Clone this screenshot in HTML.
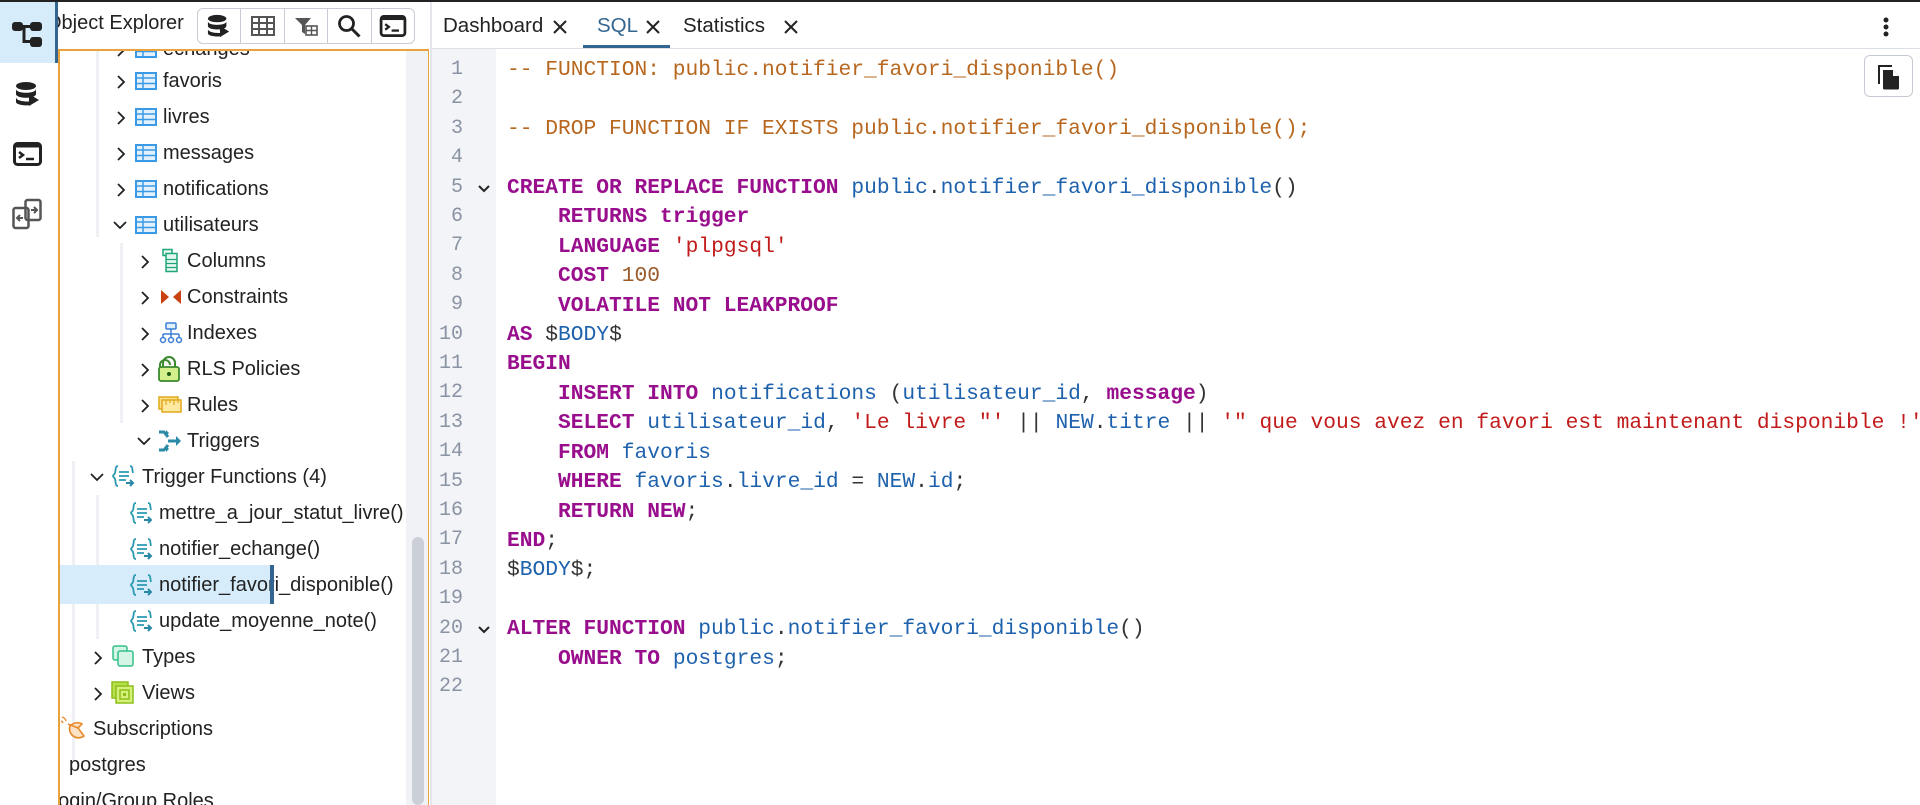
<!DOCTYPE html>
<html><head><meta charset="utf-8"><style>
*{margin:0;padding:0;box-sizing:border-box}
body{width:1920px;height:805px;overflow:hidden;background:#fff;font-family:"Liberation Sans",sans-serif;color:#222;position:relative}
.abs{position:absolute}
#top{left:0;top:0;width:1920px;height:2px;background:#222}
#bar{left:0;top:2px;width:57px;height:803px;background:#fff;z-index:5}
#bar .act{position:absolute;left:0;top:0;width:55px;height:61px;background:#d7ecfa}
#bar .act:after{content:"";position:absolute;left:55px;top:0;width:3px;height:61px;background:#326690}
#hdr{left:57px;top:2px;width:140px;height:46px;overflow:hidden}
#hdr .t{position:absolute;left:-11px;top:10px;font-size:20px;color:#222;white-space:nowrap}
#tb{left:197px;top:8px;width:218px;height:36px;border:1px solid #c9ccd4;border-radius:6px;display:flex;z-index:6;background:#fff}
#tb div{flex:1;border-right:1px solid #c9ccd4;display:flex;align-items:center;justify-content:center}
#tb div:last-child{border-right:none}
#tree{left:58px;top:49px;width:371px;height:756px;border:2px solid #e8a33d;border-bottom:none;overflow:hidden}
.row{position:absolute;left:0;height:36px;width:400px;font-size:20px;line-height:36px;white-space:nowrap}
.row .i{position:absolute;top:8px}
.row .x{position:absolute;top:0}
.guide{position:absolute;width:3px;background:#eef0f3}
#sb{left:406px;top:51px;width:22px;height:754px;background:#f1f2f5}
#thumb{left:412px;top:537px;width:12px;height:268px;background:#cbcfd8;border-radius:6px}
#sep{left:430px;top:2px;width:2px;height:803px;background:#e4e6eb}
#tabs{left:432px;top:2px;width:1488px;height:47px;border-bottom:1px solid #dcdfe6}
.tab{position:absolute;top:12px;font-size:20.5px;white-space:nowrap}
#gut{left:432px;top:49px;width:64px;height:756px;background:#f3f4f7}
.ln{position:absolute;width:40px;text-align:right;font-family:"Liberation Mono",monospace;font-size:20px;color:#8a93a3}
#code{left:507px;top:49px;width:1413px;height:756px;overflow:hidden;font-family:"Liberation Mono",monospace;font-size:21.25px;white-space:pre}
.cl{position:absolute;left:0;height:29.4px;line-height:29.4px}
.cm{color:#b8671f}.kw{color:#990e8d;font-weight:bold}.id{color:#1e62ad}.st{color:#c21b1b}.nu{color:#9a5a2a}.p{color:#333}
#copy{left:1864px;top:55px;width:49px;height:42px;border:1px solid #c6cad3;border-radius:6px;background:#fff}
</style></head><body>
<div id="top" class="abs"></div>
<div id="bar" class="abs">
 <div class="act"></div>
 <svg class="abs" style="left:11px;top:17px" width="32" height="30" viewBox="0 0 32 30"><rect x="1" y="3" width="11" height="9" rx="3" fill="#222"/><rect x="19" y="3" width="12" height="9" rx="3" fill="#222"/><rect x="19" y="18" width="12" height="10" rx="3" fill="#222"/><path d="M10 7.5h10M13 7.5v15h7" stroke="#222" stroke-width="3" fill="none"/></svg>
 <svg class="abs" style="left:15px;top:79px" width="26" height="26" viewBox="0 0 26 26"><ellipse cx="11" cy="5" rx="10" ry="4" fill="#222"/><path d="M1 8c0 5 20 5 20 0v5c0 5-20 5-20 0zM1 16c0 5 14 5 15 4v4c-5 1-15 0-15-3z" fill="#222"/><path d="M14 13l10 6-10 6z" fill="#222"/></svg>
 <svg class="abs" style="left:13px;top:140px" width="29" height="24" viewBox="0 0 29 24"><rect x="1.5" y="1.5" width="26" height="21" rx="3" fill="none" stroke="#222" stroke-width="3"/><rect x="1.5" y="1.5" width="26" height="4" fill="#222"/><path d="M6 10l4 3-4 3" stroke="#222" stroke-width="2.5" fill="none"/><path d="M13 17h8" stroke="#222" stroke-width="2.5"/></svg>
 <svg class="abs" style="left:12px;top:196px" width="30" height="32" viewBox="0 0 30 32"><rect x="1.5" y="10" width="15" height="20" rx="2" fill="none" stroke="#555" stroke-width="2.5"/><rect x="13.5" y="2" width="15" height="20" rx="2" fill="none" stroke="#555" stroke-width="2.5"/><path d="M11 20H5M8 17l-3 3 3 3M19 12h6M22 9l3 3-3 3" stroke="#555" stroke-width="2" fill="none"/></svg>
</div>
<div id="hdr" class="abs"><span class="t">Object Explorer</span></div>
<div id="tb" class="abs">
 <div><svg width="24" height="24" viewBox="0 0 26 26"><ellipse cx="11" cy="5" rx="10" ry="4" fill="#222"/><path d="M1 8c0 5 20 5 20 0v5c0 5-20 5-20 0zM1 16c0 5 14 5 15 4v4c-5 1-15 0-15-3z" fill="#222"/><path d="M14 13l10 6-10 6z" fill="#222"/></svg></div>
 <div><svg width="24" height="20" viewBox="0 0 24 20"><rect x="1" y="1" width="22" height="18" fill="none" stroke="#555" stroke-width="2"/><path d="M1 7h22M1 13h22M8 1v18M16 1v18" stroke="#555" stroke-width="2"/></svg></div>
 <div><svg width="24" height="20" viewBox="0 0 24 20"><path d="M1 2h16l-6 7v9l-3-2V9z" fill="#555"/><rect x="12" y="10" width="11" height="9" fill="none" stroke="#555" stroke-width="1.6"/><path d="M12 14.5h11M17.5 10v9" stroke="#555" stroke-width="1.4"/></svg></div>
 <div><svg width="24" height="24" viewBox="0 0 24 24"><circle cx="9.5" cy="9.5" r="7" fill="none" stroke="#222" stroke-width="2.8"/><path d="M14.5 14.5l8 8" stroke="#222" stroke-width="3"/></svg></div>
 <div><svg width="28" height="22" viewBox="0 0 29 24"><rect x="1.5" y="1.5" width="26" height="21" rx="3" fill="none" stroke="#222" stroke-width="3"/><rect x="1.5" y="1.5" width="26" height="4" fill="#222"/><path d="M6 10l4 3-4 3" stroke="#222" stroke-width="2.5" fill="none"/><path d="M13 17h8" stroke="#222" stroke-width="2.5"/></svg></div>
</div>

<div id="tree" class="abs">
 <div class="guide" style="left:36px;top:0;height:186px"></div>
 <div class="guide" style="left:60px;top:192px;height:180px"></div>
 <div class="guide" style="left:12px;top:410px;height:300px"></div>
 <div class="guide" style="left:36px;top:444px;height:144px"></div>
 <div class="row" style="top:-20px"><svg class="x" style="left:56px;top:12px" width="10" height="14" viewBox="0 0 10 14"><path d="M2 1l6 6-6 6" stroke="#222" stroke-width="1.8" fill="none"/></svg><svg class="i" style="left:75px" width="22" height="20" viewBox="0 0 22 20"><rect x="1" y="2" width="20" height="16" fill="#e3f1fc" stroke="#3b9ae6" stroke-width="2"/><path d="M1 7h20M1 12.5h20M8 2v16" stroke="#3b9ae6" stroke-width="1.5"/></svg><span class="x" style="left:103px">echanges</span></div>
 <div class="row" style="top:12px"><svg class="x" style="left:56px;top:12px" width="10" height="14" viewBox="0 0 10 14"><path d="M2 1l6 6-6 6" stroke="#222" stroke-width="1.8" fill="none"/></svg><svg class="i" style="left:75px" width="22" height="20" viewBox="0 0 22 20"><rect x="1" y="2" width="20" height="16" fill="#e3f1fc" stroke="#3b9ae6" stroke-width="2"/><path d="M1 7h20M1 12.5h20M8 2v16" stroke="#3b9ae6" stroke-width="1.5"/></svg><span class="x" style="left:103px">favoris</span></div>
 <div class="row" style="top:48px"><svg class="x" style="left:56px;top:12px" width="10" height="14" viewBox="0 0 10 14"><path d="M2 1l6 6-6 6" stroke="#222" stroke-width="1.8" fill="none"/></svg><svg class="i" style="left:75px" width="22" height="20" viewBox="0 0 22 20"><rect x="1" y="2" width="20" height="16" fill="#e3f1fc" stroke="#3b9ae6" stroke-width="2"/><path d="M1 7h20M1 12.5h20M8 2v16" stroke="#3b9ae6" stroke-width="1.5"/></svg><span class="x" style="left:103px">livres</span></div>
 <div class="row" style="top:84px"><svg class="x" style="left:56px;top:12px" width="10" height="14" viewBox="0 0 10 14"><path d="M2 1l6 6-6 6" stroke="#222" stroke-width="1.8" fill="none"/></svg><svg class="i" style="left:75px" width="22" height="20" viewBox="0 0 22 20"><rect x="1" y="2" width="20" height="16" fill="#e3f1fc" stroke="#3b9ae6" stroke-width="2"/><path d="M1 7h20M1 12.5h20M8 2v16" stroke="#3b9ae6" stroke-width="1.5"/></svg><span class="x" style="left:103px">messages</span></div>
 <div class="row" style="top:120px"><svg class="x" style="left:56px;top:12px" width="10" height="14" viewBox="0 0 10 14"><path d="M2 1l6 6-6 6" stroke="#222" stroke-width="1.8" fill="none"/></svg><svg class="i" style="left:75px" width="22" height="20" viewBox="0 0 22 20"><rect x="1" y="2" width="20" height="16" fill="#e3f1fc" stroke="#3b9ae6" stroke-width="2"/><path d="M1 7h20M1 12.5h20M8 2v16" stroke="#3b9ae6" stroke-width="1.5"/></svg><span class="x" style="left:103px">notifications</span></div>
 <div class="row" style="top:156px"><svg class="x" style="left:53px;top:13px" width="14" height="10" viewBox="0 0 14 10"><path d="M1 2l6 6 6-6" stroke="#222" stroke-width="1.8" fill="none"/></svg><svg class="i" style="left:75px" width="22" height="20" viewBox="0 0 22 20"><rect x="1" y="2" width="20" height="16" fill="#e3f1fc" stroke="#3b9ae6" stroke-width="2"/><path d="M1 7h20M1 12.5h20M8 2v16" stroke="#3b9ae6" stroke-width="1.5"/></svg><span class="x" style="left:103px">utilisateurs</span></div>
 <div class="row" style="top:192px"><svg class="x" style="left:80px;top:12px" width="10" height="14" viewBox="0 0 10 14"><path d="M2 1l6 6-6 6" stroke="#222" stroke-width="1.8" fill="none"/></svg><svg class="i" style="left:102px;top:5px" width="16" height="25" viewBox="0 0 16 24"><rect x="1" y="1" width="9" height="6" fill="#e5f7ef" stroke="#1fa67a" stroke-width="1.5"/><rect x="4" y="5" width="11" height="18" fill="#e5f7ef" stroke="#1fa67a" stroke-width="1.5"/><path d="M4 11h11M4 15h11M4 19h11" stroke="#1fa67a" stroke-width="1.2"/></svg><span class="x" style="left:127px">Columns</span></div>
 <div class="row" style="top:228px"><svg class="x" style="left:80px;top:12px" width="10" height="14" viewBox="0 0 10 14"><path d="M2 1l6 6-6 6" stroke="#222" stroke-width="1.8" fill="none"/></svg><svg class="i" style="left:100px;top:10px" width="22" height="16" viewBox="0 0 22 16"><path d="M1 1l8 7-8 7zM21 1l-8 7 8 7z" fill="#c8410f"/></svg><span class="x" style="left:127px">Constraints</span></div>
 <div class="row" style="top:264px"><svg class="x" style="left:80px;top:12px" width="10" height="14" viewBox="0 0 10 14"><path d="M2 1l6 6-6 6" stroke="#222" stroke-width="1.8" fill="none"/></svg><svg class="i" style="left:99px;top:7px" width="24" height="22" viewBox="0 0 24 22"><rect x="7" y="1" width="10" height="6" rx="1" fill="#e3f1fc" stroke="#3b7fd6" stroke-width="1.5"/><path d="M12 7v5M4 12h16M4 12v4M12 12v4M20 12v4" stroke="#3b7fd6" stroke-width="1.5" fill="none"/><circle cx="4" cy="18" r="2.5" fill="#fff" stroke="#3b7fd6" stroke-width="1.5"/><circle cx="12" cy="18" r="2.5" fill="#fff" stroke="#3b7fd6" stroke-width="1.5"/><circle cx="20" cy="18" r="2.5" fill="#fff" stroke="#3b7fd6" stroke-width="1.5"/></svg><span class="x" style="left:127px">Indexes</span></div>
 <div class="row" style="top:300px"><svg class="x" style="left:80px;top:12px" width="10" height="14" viewBox="0 0 10 14"><path d="M2 1l6 6-6 6" stroke="#222" stroke-width="1.8" fill="none"/></svg><svg class="i" style="left:97px;top:5px" width="24" height="26" viewBox="0 0 24 26"><path d="M6 11V7a6 6 0 0112 0v4" fill="none" stroke="#3a8a2e" stroke-width="2"/><path d="M3 13V9a5 5 0 0110 0" fill="none" stroke="#3a8a2e" stroke-width="2"/><rect x="2" y="11" width="20" height="14" rx="2" fill="#d4f08c" stroke="#3a8a2e" stroke-width="1.8"/><circle cx="12" cy="18" r="2" fill="#1d5a16"/></svg><span class="x" style="left:127px">RLS Policies</span></div>
 <div class="row" style="top:336px"><svg class="x" style="left:80px;top:12px" width="10" height="14" viewBox="0 0 10 14"><path d="M2 1l6 6-6 6" stroke="#222" stroke-width="1.8" fill="none"/></svg><svg class="i" style="left:98px;top:9px" width="24" height="18" viewBox="0 0 24 18"><rect x="1" y="1" width="19" height="12" fill="#fbe28a" stroke="#e0a81c" stroke-width="1.5"/><rect x="4" y="4" width="19" height="12" fill="#fde9a0" stroke="#e0a81c" stroke-width="1.5"/><path d="M8 4v5M12 4v3M16 4v5M20 4v3" stroke="#e0a81c" stroke-width="1.2"/></svg><span class="x" style="left:127px">Rules</span></div>
 <div class="row" style="top:372px"><svg class="x" style="left:77px;top:13px" width="14" height="10" viewBox="0 0 14 10"><path d="M1 2l6 6 6-6" stroke="#222" stroke-width="1.8" fill="none"/></svg><svg class="i" style="left:98px;top:6px" width="24" height="24" viewBox="0 0 24 24"><path d="M1 3h5l4 5M1 21h5l4-5M10 12h10" stroke="#2a8aa8" stroke-width="3" fill="none"/><path d="M18 7l5 5-5 5z" fill="#2a8aa8"/><path d="M8 1l3 3-3 3zM8 17l3 3-3 3z" fill="#2a8aa8"/></svg><span class="x" style="left:127px">Triggers</span></div>
 <div class="row" style="top:408px"><svg class="x" style="left:30px;top:13px" width="14" height="10" viewBox="0 0 14 10"><path d="M1 2l6 6 6-6" stroke="#222" stroke-width="1.8" fill="none"/></svg><svg class="i" style="left:52px;top:5px" width="24" height="24" viewBox="0 0 24 24"><path d="M6 2C3 2 4 6 3 9c-.5 1.5-2 2-2 3 0 1 1.5 1.5 2 3 1 3 0 7 3 7M18 2c3 0 2 4 3 7" fill="none" stroke="#2a9ab0" stroke-width="1.8"/><path d="M7 8h10M7 12h10M7 16h7" stroke="#2a9ab0" stroke-width="1.8"/><path d="M14 19h6M18 16l3 3-3 3" stroke="#2a8aa8" stroke-width="2" fill="none"/></svg><span class="x" style="left:82px">Trigger Functions (4)</span></div>
 <div class="row" style="top:444px"><svg class="i" style="left:70px;top:6px" width="24" height="24" viewBox="0 0 24 24"><path d="M6 2C3 2 4 6 3 9c-.5 1.5-2 2-2 3 0 1 1.5 1.5 2 3 1 3 0 7 3 7M18 2c3 0 2 4 3 7" fill="none" stroke="#2a9ab0" stroke-width="1.8"/><path d="M7 8h10M7 12h10M7 16h7" stroke="#2a9ab0" stroke-width="1.8"/><path d="M14 19h6M18 16l3 3-3 3" stroke="#2a8aa8" stroke-width="2" fill="none"/></svg><span class="x" style="left:99px">mettre_a_jour_statut_livre()</span></div>
 <div class="row" style="top:480px"><svg class="i" style="left:70px;top:6px" width="24" height="24" viewBox="0 0 24 24"><path d="M6 2C3 2 4 6 3 9c-.5 1.5-2 2-2 3 0 1 1.5 1.5 2 3 1 3 0 7 3 7M18 2c3 0 2 4 3 7" fill="none" stroke="#2a9ab0" stroke-width="1.8"/><path d="M7 8h10M7 12h10M7 16h7" stroke="#2a9ab0" stroke-width="1.8"/><path d="M14 19h6M18 16l3 3-3 3" stroke="#2a8aa8" stroke-width="2" fill="none"/></svg><span class="x" style="left:99px">notifier_echange()</span></div>
 <div class="row" style="top:514px;width:213px;height:39px;background:#d7ecfa"></div>
 <div class="abs" style="left:210px;top:514px;width:4px;height:39px;background:#326690;z-index:2"></div>
 <div class="row" style="top:516px"><svg class="i" style="left:70px;top:6px" width="24" height="24" viewBox="0 0 24 24"><path d="M6 2C3 2 4 6 3 9c-.5 1.5-2 2-2 3 0 1 1.5 1.5 2 3 1 3 0 7 3 7M18 2c3 0 2 4 3 7" fill="none" stroke="#2a9ab0" stroke-width="1.8"/><path d="M7 8h10M7 12h10M7 16h7" stroke="#2a9ab0" stroke-width="1.8"/><path d="M14 19h6M18 16l3 3-3 3" stroke="#2a8aa8" stroke-width="2" fill="none"/></svg><span class="x" style="left:99px">notifier_favori_disponible()</span></div>
 <div class="row" style="top:552px"><svg class="i" style="left:70px;top:6px" width="24" height="24" viewBox="0 0 24 24"><path d="M6 2C3 2 4 6 3 9c-.5 1.5-2 2-2 3 0 1 1.5 1.5 2 3 1 3 0 7 3 7M18 2c3 0 2 4 3 7" fill="none" stroke="#2a9ab0" stroke-width="1.8"/><path d="M7 8h10M7 12h10M7 16h7" stroke="#2a9ab0" stroke-width="1.8"/><path d="M14 19h6M18 16l3 3-3 3" stroke="#2a8aa8" stroke-width="2" fill="none"/></svg><span class="x" style="left:99px">update_moyenne_note()</span></div>
 <div class="row" style="top:588px"><svg class="x" style="left:33px;top:12px" width="10" height="14" viewBox="0 0 10 14"><path d="M2 1l6 6-6 6" stroke="#222" stroke-width="1.8" fill="none"/></svg><svg class="i" style="left:52px;top:6px" width="22" height="22" viewBox="0 0 22 22"><rect x="1" y="1" width="14" height="14" rx="2" fill="#d5f5e6" stroke="#35c08a" stroke-width="1.5"/><rect x="6" y="6" width="15" height="15" rx="2" fill="#d5f5e6" stroke="#35c08a" stroke-width="1.5"/></svg><span class="x" style="left:82px">Types</span></div>
 <div class="row" style="top:624px"><svg class="x" style="left:33px;top:12px" width="10" height="14" viewBox="0 0 10 14"><path d="M2 1l6 6-6 6" stroke="#222" stroke-width="1.8" fill="none"/></svg><svg class="i" style="left:51px;top:6px" width="23" height="23" viewBox="0 0 23 23"><rect x="1" y="1" width="16" height="16" fill="#b8e04a" stroke="#8cbd1c" stroke-width="1.5"/><rect x="5" y="5" width="17" height="17" fill="#d6f07a" stroke="#8cbd1c" stroke-width="1.5"/><rect x="9" y="9" width="9" height="9" fill="none" stroke="#8cbd1c" stroke-width="1.5"/><rect x="12" y="12" width="3" height="3" fill="#8cbd1c"/></svg><span class="x" style="left:82px">Views</span></div>
 <div class="row" style="top:660px"><svg class="i" style="left:0;top:3px" width="28" height="28" viewBox="0 0 28 28"><path d="M2 3a6 6 0 014 4M1 7a3 3 0 012 2" fill="none" stroke="#e88a2a" stroke-width="1.4"/><path d="M10 12a9 9 0 0014 10l-6-8 4-4c-3-2-8-2-12 2z" fill="#fbe2c5" stroke="#e88a2a" stroke-width="1.6"/><path d="M8 10l10 4" stroke="#e88a2a" stroke-width="1.6"/></svg><span class="x" style="left:33px">Subscriptions</span></div>
 <div class="row" style="top:696px"><span class="x" style="left:9px">postgres</span></div>
 <div class="row" style="top:732px"><span class="x" style="left:-13px">Login/Group Roles</span></div>
</div>
<div id="sb" class="abs"></div>
<div id="thumb" class="abs"></div>
<div id="sep" class="abs"></div>

<div id="tabs" class="abs">
 <span class="tab" style="left:11px">Dashboard</span>
 <svg class="abs" style="left:121px;top:18px" width="14" height="14" viewBox="0 0 14 14"><path d="M1 1l12 12M13 1L1 13" stroke="#222" stroke-width="2"/></svg>
 <span class="tab" style="left:165px;color:#326690">SQL</span>
 <svg class="abs" style="left:214px;top:18px" width="14" height="14" viewBox="0 0 14 14"><path d="M1 1l12 12M13 1L1 13" stroke="#222" stroke-width="2"/></svg>
 <div class="abs" style="left:151px;top:43px;width:87px;height:3px;background:#326690"></div>
 <span class="tab" style="left:251px">Statistics</span>
 <svg class="abs" style="left:352px;top:18px" width="14" height="14" viewBox="0 0 14 14"><path d="M1 1l12 12M13 1L1 13" stroke="#222" stroke-width="2"/></svg>
 <svg class="abs" style="left:1450px;top:14px" width="8" height="22" viewBox="0 0 8 22"><circle cx="4" cy="4" r="2.5" fill="#222"/><circle cx="4" cy="11" r="2.5" fill="#222"/><circle cx="4" cy="18" r="2.5" fill="#222"/></svg>
</div>
<div id="gut" class="abs">
 <div class="ln" style="right:33px;top:9px">1</div><div class="ln" style="right:33px;top:38.4px">2</div><div class="ln" style="right:33px;top:67.8px">3</div><div class="ln" style="right:33px;top:97.2px">4</div><div class="ln" style="right:33px;top:126.6px">5</div><div class="ln" style="right:33px;top:156px">6</div><div class="ln" style="right:33px;top:185.4px">7</div><div class="ln" style="right:33px;top:214.8px">8</div><div class="ln" style="right:33px;top:244.2px">9</div><div class="ln" style="right:33px;top:273.6px">10</div><div class="ln" style="right:33px;top:303px">11</div><div class="ln" style="right:33px;top:332.4px">12</div><div class="ln" style="right:33px;top:361.8px">13</div><div class="ln" style="right:33px;top:391.2px">14</div><div class="ln" style="right:33px;top:420.6px">15</div><div class="ln" style="right:33px;top:450px">16</div><div class="ln" style="right:33px;top:479.4px">17</div><div class="ln" style="right:33px;top:508.8px">18</div><div class="ln" style="right:33px;top:538.2px">19</div><div class="ln" style="right:33px;top:567.6px">20</div><div class="ln" style="right:33px;top:597px">21</div><div class="ln" style="right:33px;top:626.4px">22</div>
 <svg class="abs" style="left:46px;top:136px" width="12" height="8" viewBox="0 0 12 8"><path d="M1 1l5 5 5-5" stroke="#222" stroke-width="2" fill="none"/></svg>
 <svg class="abs" style="left:46px;top:577px" width="12" height="8" viewBox="0 0 12 8"><path d="M1 1l5 5 5-5" stroke="#222" stroke-width="2" fill="none"/></svg>
</div>
<div id="code" class="abs">
<div class="cl" style="top:7px"><span class="cm">-- FUNCTION: public.notifier_favori_disponible()</span></div>
<div class="cl" style="top:66px"><span class="cm">-- DROP FUNCTION IF EXISTS public.notifier_favori_disponible();</span></div>
<div class="cl" style="top:125px"><span class="kw">CREATE OR REPLACE FUNCTION</span> <span class="id">public</span><span class="p">.</span><span class="id">notifier_favori_disponible</span><span class="p">()</span></div>
<div class="cl" style="top:154px">    <span class="kw">RETURNS trigger</span></div>
<div class="cl" style="top:184px">    <span class="kw">LANGUAGE</span> <span class="st">'plpgsql'</span></div>
<div class="cl" style="top:213px">    <span class="kw">COST</span> <span class="nu">100</span></div>
<div class="cl" style="top:243px">    <span class="kw">VOLATILE NOT LEAKPROOF</span></div>
<div class="cl" style="top:272px"><span class="kw">AS</span> <span class="p">$</span><span class="id">BODY</span><span class="p">$</span></div>
<div class="cl" style="top:301px"><span class="kw">BEGIN</span></div>
<div class="cl" style="top:331px">    <span class="kw">INSERT INTO</span> <span class="id">notifications</span> <span class="p">(</span><span class="id">utilisateur_id</span><span class="p">,</span> <span class="kw">message</span><span class="p">)</span></div>
<div class="cl" style="top:360px">    <span class="kw">SELECT</span> <span class="id">utilisateur_id</span><span class="p">,</span> <span class="st">'Le livre "'</span> <span class="p">||</span> <span class="id">NEW</span><span class="p">.</span><span class="id">titre</span> <span class="p">||</span> <span class="st">'" que vous avez en favori est maintenant disponible !'</span></div>
<div class="cl" style="top:390px">    <span class="kw">FROM</span> <span class="id">favoris</span></div>
<div class="cl" style="top:419px">    <span class="kw">WHERE</span> <span class="id">favoris</span><span class="p">.</span><span class="id">livre_id</span> <span class="p">=</span> <span class="id">NEW</span><span class="p">.</span><span class="id">id</span><span class="p">;</span></div>
<div class="cl" style="top:449px">    <span class="kw">RETURN NEW</span><span class="p">;</span></div>
<div class="cl" style="top:478px"><span class="kw">END</span><span class="p">;</span></div>
<div class="cl" style="top:507px"><span class="p">$</span><span class="id">BODY</span><span class="p">$;</span></div>
<div class="cl" style="top:566px"><span class="kw">ALTER FUNCTION</span> <span class="id">public</span><span class="p">.</span><span class="id">notifier_favori_disponible</span><span class="p">()</span></div>
<div class="cl" style="top:596px">    <span class="kw">OWNER TO</span> <span class="id">postgres</span><span class="p">;</span></div>
</div>
<div id="copy" class="abs"><svg class="abs" style="left:12px;top:8px" width="24" height="26" viewBox="0 0 24 26"><path d="M2 20V2h13" stroke="#222" stroke-width="2" fill="none"/><path d="M6 6h10l6 6v12a1.5 1.5 0 01-1.5 1.5h-13A1.5 1.5 0 016 24z" fill="#222"/><path d="M16 6v6h6" fill="#fff"/></svg></div>
</body></html>
